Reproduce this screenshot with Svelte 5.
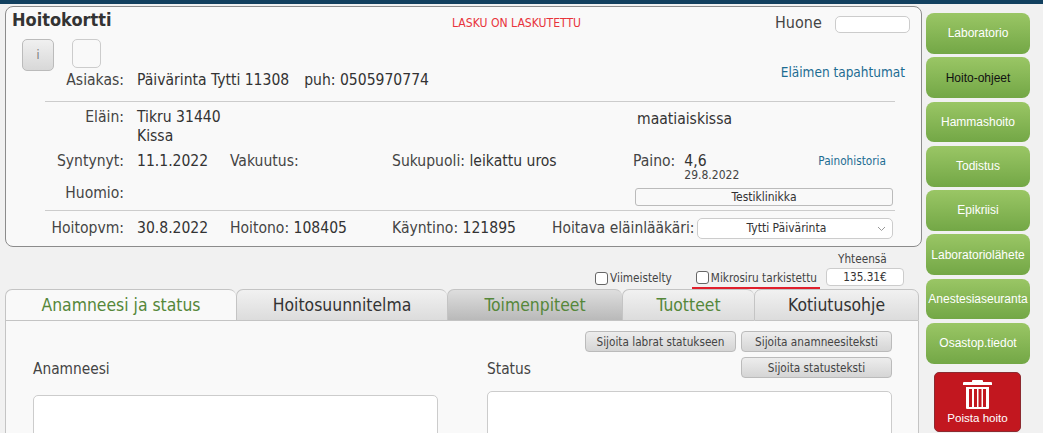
<script lang="ts">
	const sideLinks = [
		{ label: 'Laboratorio' },
		{ label: 'Hoito-ohjeet', dark: true },
		{ label: 'Hammashoito' },
		{ label: 'Todistus' },
		{ label: 'Epikriisi' },
		{ label: 'Laboratoriolähete' },
		{ label: 'Anestesiaseuranta' },
		{ label: 'Osastop.tiedot' }
	];

	const tabs = [
		{ label: 'Anamneesi ja status', width: 231, kind: 'active' },
		{ label: 'Hoitosuunnitelma', width: 211, kind: '' },
		{ label: 'Toimenpiteet', width: 175, kind: 'filled' },
		{ label: 'Tuotteet', width: 132, kind: 'green' },
		{ label: 'Kotiutusohje', width: 165, kind: '' }
	];
</script>

<div class="topbar"></div>

<div class="page">
	<main class="left">
		<section class="card">
			<header class="title-row">
				<h1>Hoitokortti</h1>
				<span class="invoiced">LASKU ON LASKUTETTU</span>
				<span class="room">Huone</span>
				<input class="room-input" type="text" aria-label="Huone" />
			</header>

			<div class="intro">
				<div class="icon-buttons">
					<button class="info" type="button">i</button>
					<button class="blank" type="button" aria-label="Tyhjä"></button>
				</div>
				<a class="events" href="#tapahtumat">Eläimen tapahtumat</a>
				<div class="customer">
					<span class="label">Asiakas:</span>
					<span class="value">Päivärinta Tytti 11308</span>
					<span class="value phone">puh: 0505970774</span>
				</div>
			</div>

			<hr />

			<div class="grid animal">
				<span class="label">Eläin:</span>
				<span class="value wide">Tikru 31440<br />Kissa</span>
				<span class="value breed">maatiaiskissa</span>
			</div>

			<div class="grid born">
				<span class="label">Syntynyt:</span>
				<span class="value">11.1.2022</span>
				<span class="label-plain">Vakuutus:</span>
				<span class="label-plain">Sukupuoli: <span class="value">leikattu uros</span></span>
				<div class="weight">
					<span class="label-plain">Paino:</span>
					<div class="weight-value">
						<span class="value">4,6</span>
						<small>29.8.2022</small>
					</div>
					<a class="history" href="#paino">Painohistoria</a>
				</div>
			</div>

			<div class="grid note">
				<span class="label">Huomio:</span>
				<button class="clinic" type="button">Testiklinikka</button>
			</div>

			<hr />

			<div class="grid visit">
				<span class="label">Hoitopvm:</span>
				<span class="value">30.8.2022</span>
				<span class="label-plain">Hoitono: <span class="value">108405</span></span>
				<span class="label-plain">Käyntino: <span class="value">121895</span></span>
				<div class="vet">
					<span class="label-plain vet-label">Hoitava eläinlääkäri:</span>
					<div class="select">
						<span>Tytti Päivärinta</span>
						<svg width="9" height="6" viewBox="0 0 9 6" aria-hidden="true">
							<path d="M1 1l3.5 3.5L8 1" fill="none" stroke="#999" stroke-width="1" />
						</svg>
					</div>
				</div>
			</div>
		</section>

		<div class="summary">
			<label class="check first"><input type="checkbox" />Viimeistelty</label>
			<label class="check chip"><input type="checkbox" />Mikrosiru tarkistettu</label>
			<div class="total">
				<span class="total-label">Yhteensä</span>
				<div class="total-box">135.31€</div>
			</div>
		</div>

		<nav class="tabs">
			{#each tabs as tab}
				<button class="tab {tab.kind}" style="width: {tab.width}px" type="button">{tab.label}</button>
			{/each}
		</nav>

		<section class="panel">
			<div class="actions">
				<div class="action-col">
					<button class="grey" type="button">Sijoita labrat statukseen</button>
				</div>
				<div class="action-col">
					<button class="grey" type="button">Sijoita anamneesiteksti</button>
					<button class="grey" type="button">Sijoita statusteksti</button>
				</div>
			</div>
			<div class="fields">
				<div class="field">
					<div class="field-label">Anamneesi</div>
					<div class="area anamnesis"></div>
				</div>
				<div class="field">
					<div class="field-label">Status</div>
					<div class="area status"></div>
				</div>
			</div>
		</section>
	</main>

	<aside class="side">
		{#each sideLinks as link}
			<button class="green-btn" class:dark={link.dark} type="button">{link.label}</button>
		{/each}
		<button class="delete" type="button">
			<svg width="29" height="29" viewBox="0 0 29 29" aria-hidden="true">
				<path d="M9 2V1a1 1 0 0 1 1-1h9a1 1 0 0 1 1 1v1h8a1 1 0 0 1 1 1v2H0V3a1 1 0 0 1 1-1z" fill="#fff" />
				<path d="M3 7h23v21a1 1 0 0 1-1 1H4a1 1 0 0 1-1-1z" fill="#fff" />
				<path d="M6 9h3v18H6zM11 9h3v18h-3zM15.500 9h3v18h-3zM20 9h3v18h-3z" fill="#c2171f" />
			</svg>
			<span>Poista hoito</span>
		</button>
	</aside>
</div>

<style>
	:global(html),
	:global(body) {
		margin: 0;
		height: 433px;
		overflow: hidden;
		background: #f1f1f1;
	}

	* {
		box-sizing: border-box;
	}

	.topbar {
		height: 4px;
		background: #12405f;
	}

	.page {
		display: flex;
		align-items: flex-start;
		height: 429px;
		padding-left: 5px;
		font-family: 'DejaVu Sans Condensed', 'DejaVu Sans', sans-serif;
		font-stretch: condensed;
		font-size: 15.55px;
		color: #444;
	}

	.left {
		width: 917px;
		flex: none;
		padding-top: 2px;
	}

	.card {
		height: 241px;
		background: #f9f9f9;
		border: 1px solid #8c8c8c;
		border-radius: 8px;
	}

	.title-row {
		display: flex;
		align-items: center;
		height: 26px;
		padding: 0 11px 0 6px;
	}

	h1 {
		margin: 0;
		width: 440px;
		padding-bottom: 2px;
		font-size: 18px;
		font-weight: 700;
		color: #333;
	}

	.invoiced {
		width: 323px;
		margin-top: 6px;
		font-size: 12.1px;
		color: #e8343c;
	}

	.room {
		width: 60px;
		margin-top: 4px;
		font-size: 16px;
	}

	.room-input {
		width: 75px;
		height: 17px;
		margin-top: 8px;
		background: #fff;
		border: 1px solid #ccc;
		border-radius: 5px;
	}

	.intro {
		display: grid;
		grid-template-columns: 1fr auto;
		align-content: start;
		height: 68px;
		padding: 6px 16px 0 16px;
	}

	.icon-buttons {
		display: flex;
		align-items: flex-start;
		gap: 18px;
		height: 32px;
	}

	.info {
		width: 32px;
		height: 32px;
		padding: 0;
		background: linear-gradient(#f0f0f0, #d8d8d8);
		border: 1px solid #bbb;
		border-radius: 5px;
		font: inherit;
		font-size: 12px;
		color: #777;
	}

	.blank {
		width: 29px;
		height: 29px;
		background: #f9f9f9;
		border: 1px solid #ccc;
		border-radius: 5px;
	}

	.events {
		justify-self: end;
		padding-top: 25px;
		font-size: 13.5px;
		color: #1d6c92;
		text-decoration: none;
	}

	.customer {
		grid-column: 1 / -1;
		display: flex;
		margin-left: -16px;
		margin-top: -9px;
	}

	.customer .label {
		width: 131px;
	}

	.phone {
		margin-left: 15px;
	}

	.label {
		padding-right: 13px;
		text-align: right;
		color: #444;
	}

	.label-plain {
		color: #444;
		white-space: nowrap;
	}

	.value {
		color: #333;
		white-space: nowrap;
	}

	hr {
		height: 1px;
		margin: 0 26px 0 39px;
		background: #ccc;
		border: 0;
	}

	.grid {
		display: grid;
		grid-template-columns: 131px 93px 162px 241px 1fr;
	}

	.animal {
		height: 46px;
		padding-top: 6px;
		line-height: 19px;
	}

	.breed {
		grid-column: 5;
		grid-row: 1;
		margin-left: 4px;
		padding-top: 2px;
	}

	.animal .wide {
		grid-column: 2 / 4;
		grid-row: 1;
	}

	.animal .label {
		grid-row: 1;
	}

	.born {
		height: 26px;
		padding-top: 4px;
	}

	.born > * {
		line-height: 18px;
	}

	.weight {
		display: flex;
		align-items: flex-start;
	}

	.weight-value {
		display: flex;
		flex-direction: column;
		width: 134px;
		margin-left: 9px;
	}

	.weight-value small {
		margin-top: -1px;
		font-size: 12px;
		line-height: 13px;
		color: #444;
	}

	.history {
		font-size: 11.7px;
		color: #1d6c92;
		text-decoration: none;
	}

	.note {
		height: 36px;
		align-items: start;
		padding-top: 10px;
	}

	.note .label {
		line-height: 18px;
	}

	.clinic {
		grid-column: 2 / 6;
		justify-self: end;
		width: 258px;
		height: 18px;
		margin: 4px 28px 0 0;
		padding: 0;
		background: #f9f9f9;
		border: 1px solid #bbb;
		border-radius: 3px;
		font: inherit;
		font-size: 12px;
		color: #333;
	}

	.visit {
		height: 30px;
		align-items: center;
		padding-top: 4px;
	}

	.vet {
		display: flex;
		align-items: center;
		margin-left: -81px;
	}

	.vet-label {
		font-size: 15.4px;
	}

	.select {
		display: flex;
		align-items: center;
		justify-content: center;
		position: relative;
		width: 196px;
		height: 21px;
		margin-left: 3px;
		padding-right: 18px;
		background: #fff;
		border: 1px solid #ccc;
		border-radius: 5px;
		font-size: 12px;
		color: #333;
	}

	.select svg {
		position: absolute;
		right: 6px;
		top: 7px;
	}

	.summary {
		display: flex;
		justify-content: flex-end;
		align-items: flex-end;
		height: 42px;
		padding-right: 18px;
		font-size: 11.7px;
	}

	.check {
		display: flex;
		align-items: center;
		height: 20px;
		margin-bottom: 1px;
		color: #444;
	}

	.check input {
		appearance: none;
		width: 13px;
		height: 13px;
		margin: 0 2px 0 0;
		background: #fff;
		border: 1px solid #666;
		border-radius: 3px;
	}

	.first {
		margin-right: 20px;
	}

	.chip {
		height: 21px;
		margin: 0 6px 0 0;
		padding: 0 3px 0 4px;
		border-bottom: 2px solid #e01f2c;
	}

	.total {
		display: flex;
		flex-direction: column;
		gap: 2px;
		width: 78px;
		margin-bottom: 3px;
	}

	.total-label {
		padding-left: 12px;
	}

	.total-box {
		height: 18px;
		line-height: 16px;
		text-align: center;
		background: #fff;
		border: 1px solid #ccc;
		border-radius: 4px;
		color: #333;
	}

	.tabs {
		display: flex;
		height: 32px;
		width: 914px;
	}

	.tab {
		height: 32px;
		padding: 0;
		background: linear-gradient(#f1f1f1, #dcdcdc);
		border: 1px solid #c4c4c4;
		border-right-width: 0;
		border-radius: 7px 7px 0 0;
		font: inherit;
		font-size: 17.4px;
		color: #333;
	}

	.tab:last-child {
		border-right-width: 1px;
	}

	.tab.active {
		background: #f9f9f9;
		color: #55873a;
	}

	.tab.filled {
		background: linear-gradient(#dedede, #b9b9b9);
		color: #55873a;
	}

	.tab.green {
		color: #55873a;
	}

	.panel {
		width: 914px;
		height: 112px;
		overflow: hidden;
		background: #f9f9f9;
		border: 1px solid #c4c4c4;
		border-width: 0 1px;
	}

	.actions {
		display: flex;
		justify-content: flex-end;
		gap: 5px;
		padding: 10px 26px 0 0;
	}

	.action-col {
		display: flex;
		flex-direction: column;
		gap: 5px;
	}

	.grey {
		width: 151px;
		height: 21px;
		padding: 0;
		background: linear-gradient(#ededed, #d5d5d5);
		border: 1px solid #bbb;
		border-radius: 4px;
		font: inherit;
		font-size: 11.7px;
		color: #444;
	}

	.fields {
		display: flex;
		gap: 49px;
		margin-top: -19px;
		padding-left: 27px;
	}

	.field {
		width: 405px;
	}

	.field-label {
		font-size: 15.3px;
		line-height: 20px;
	}

	.area {
		background: #fff;
		border: 1px solid #ccc;
		border-radius: 5px;
		height: 60px;
	}

	.anamnesis {
		margin-top: 16px;
	}

	.status {
		margin-top: 12px;
	}

	.side {
		display: flex;
		flex-direction: column;
		align-items: flex-start;
		gap: 3.6px;
		width: 121px;
		padding: 9px 0 0 4px;
		font-family: 'Liberation Sans', Arial, sans-serif;
	}

	.green-btn {
		width: 104px;
		height: 40.7px;
		padding: 0;
		background: linear-gradient(#9ac665, #73a746);
		border: 0;
		border-radius: 8px;
		font: inherit;
		font-size: 12px;
		color: #fff;
		white-space: nowrap;
	}

	.green-btn.dark {
		color: #111;
	}

	.delete {
		display: flex;
		flex-direction: column;
		align-items: center;
		gap: 2px;
		width: 87px;
		height: 60px;
		margin: 5px 0 0 8px;
		padding: 7px 0 0;
		background: #c2171f;
		border: 1px solid #8c2a30;
		border-radius: 5px;
		font: inherit;
		font-size: 11.6px;
		color: #fff;
	}
</style>
